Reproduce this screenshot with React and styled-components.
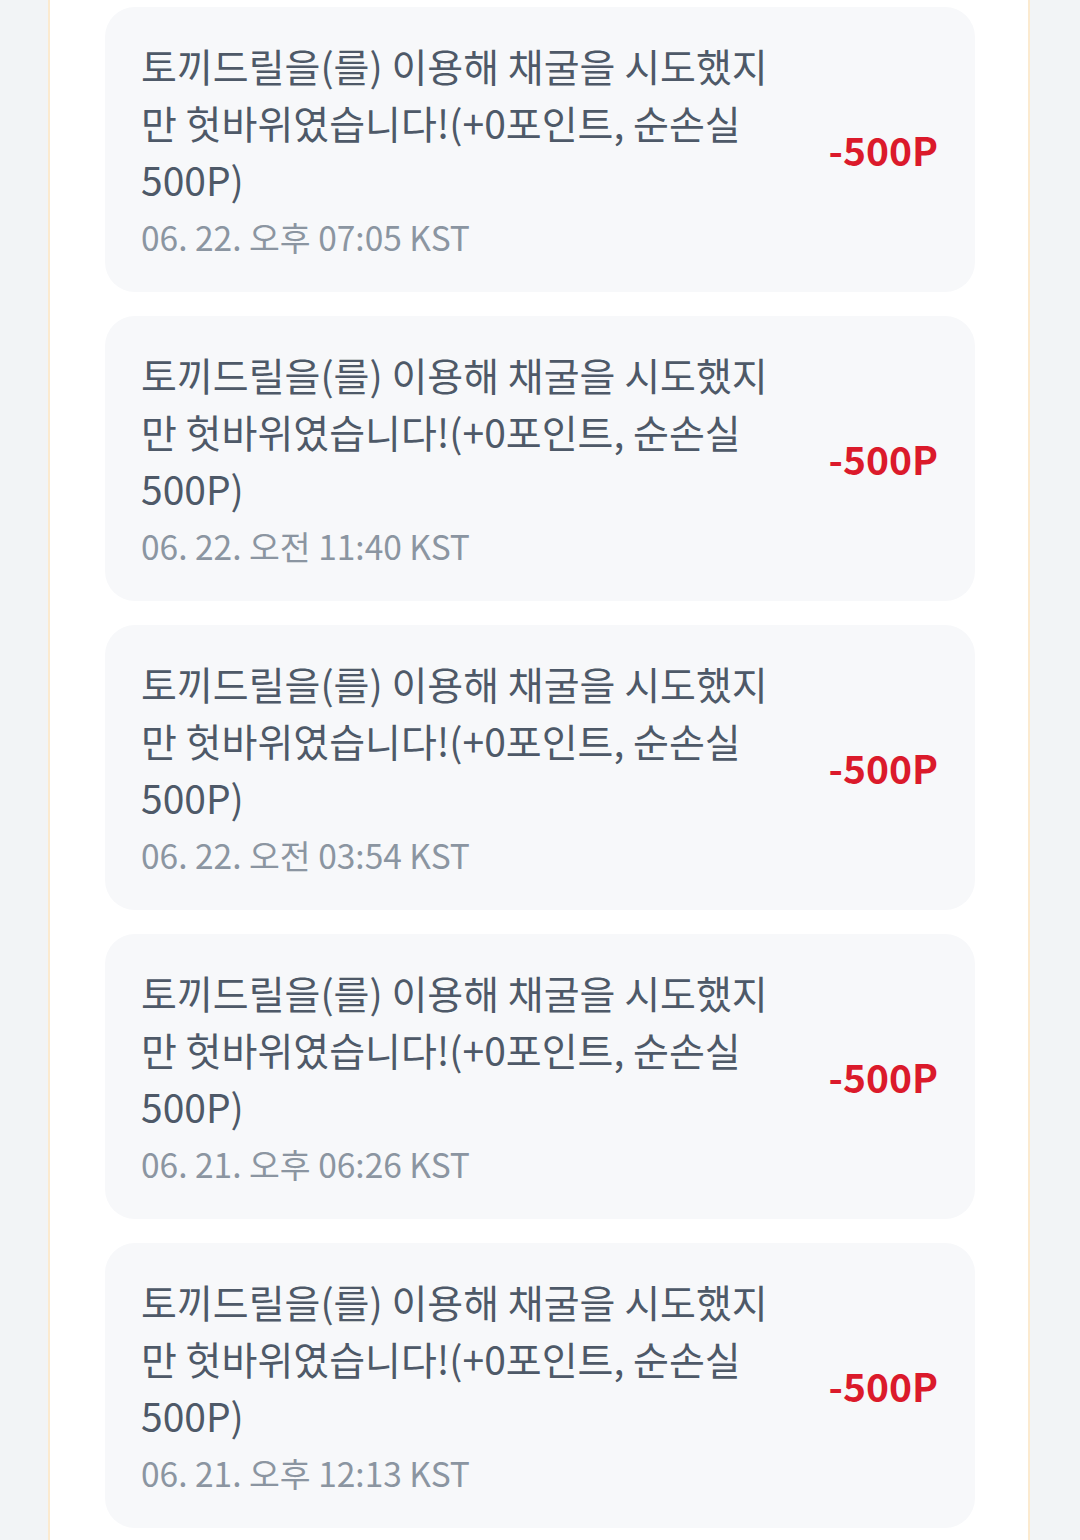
import styled, { createGlobalStyle } from "styled-components";

const GlobalStyle = createGlobalStyle`
  html, body {
    margin: 0;
    padding: 0;
    background: #f2f4f6;
  }
  body {
    font-family: "Noto Sans CJK KR", "Noto Sans", sans-serif;
  }
`;

const Page = styled.div`
  min-height: 1540px;
  display: flex;
  justify-content: flex-start;
  padding-left: 48px;
`;

const Panel = styled.main`
  width: 982px;
  min-height: 1540px;
  background: #ffffff;
  border-left: 2px solid #fbead0;
  border-right: 2px solid #fbead0;
  padding: 7px 53px 0 55px;
  box-sizing: border-box;
  display: flex;
  flex-direction: column;
  gap: 24px;
`;

const Card = styled.div`
  background: #f7f8fa;
  border-radius: 30px;
  padding: 30px 37px 31px 36px;
  display: flex;
  align-items: center;
  justify-content: space-between;
`;

const Info = styled.div`
  width: 650px;
  display: flex;
  flex-direction: column;
`;

const Message = styled.p`
  margin: 0;
  font-size: 39px;
  line-height: 57px;
  color: #4e5968;
`;

const Time = styled.span`
  margin-top: 5px;
  font-size: 33.5px;
  line-height: 48px;
  color: #8b95a1;
`;

const Amount = styled.span`
  font-size: 39px;
  font-weight: 700;
  color: ${(props) => (props.negative ? "#db1a2b" : "#3182f6")};
  white-space: nowrap;
`;

const history = [
  { time: "06. 22. 오후 07:05 KST" },
  { time: "06. 22. 오전 11:40 KST" },
  { time: "06. 22. 오전 03:54 KST" },
  { time: "06. 21. 오후 06:26 KST" },
  { time: "06. 21. 오후 12:13 KST" },
];

const App = () => {
  return (
    <>
      <GlobalStyle />
      <Page>
        <Panel>
          {history.map((item) => (
            <Card key={item.time}>
              <Info>
                <Message>
                  토끼드릴을(를) 이용해 채굴을 시도했지만 헛바위였습니다!(+0포인트, 순손실 500P)
                </Message>
                <Time>{item.time}</Time>
              </Info>
              <Amount negative>-500P</Amount>
            </Card>
          ))}
        </Panel>
      </Page>
    </>
  );
};

export default App;
